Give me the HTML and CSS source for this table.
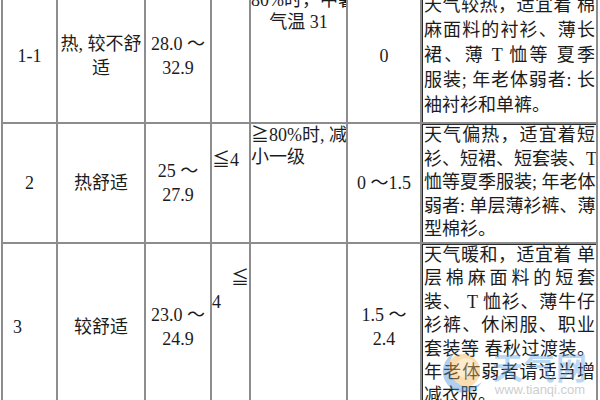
FILE: index.html
```html
<!DOCTYPE html>
<html lang="zh-CN">
<head>
<meta charset="utf-8">
<title>穿衣指数</title>
<link rel="stylesheet" href="styles.css">
</head>
<body>
<div class="grid">
  <!-- row 1 -->
  <div class="cell mid">1-1</div>
  <div class="cell mid">热, 较不舒<br>适</div>
  <div class="cell mid">28.0 ～<br>32.9</div>
  <div class="cell"></div>
  <div class="cell cond cond-center">80%时，中暑<br>气温 31</div>
  <div class="cell mid">0</div>
  <div class="cell desc desc-mid lh25">
    <span class="ln">天气较热，适宜着 棉</span>
    <span class="ln">麻面料的衬衫、薄长</span>
    <span class="ln">裙、薄 T 恤等 夏季</span>
    <span class="ln">服装; 年老体弱者: 长</span>
    <span class="ln last">袖衬衫和单裤。</span>
  </div>

  <!-- row 2 -->
  <div class="cell mid">2</div>
  <div class="cell mid">热舒适</div>
  <div class="cell mid">25 ～<br>27.9</div>
  <div class="cell lim"><div class="blank"></div><div>≦4</div></div>
  <div class="cell cond">≧80%时, 减<br>小一级</div>
  <div class="cell mid">0 ～1.5</div>
  <div class="cell desc lh236">
    <span class="ln">天气偏热，适宜着短</span>
    <span class="ln">衫、短裙、短套装、T</span>
    <span class="ln">恤等夏季服装; 年老体</span>
    <span class="ln">弱者: 单层薄衫裤、薄</span>
    <span class="ln last">型棉衫。</span>
  </div>

  <!-- row 3 -->
  <div class="cell mid num-left">3</div>
  <div class="cell mid">较舒适</div>
  <div class="cell mid">23.0 ～<br>24.9</div>
  <div class="cell lim"><div class="blank"></div><div class="lim-sign">≦</div><div>4</div></div>
  <div class="cell cond"></div>
  <div class="cell mid">1.5 ～<br>2.4</div>
  <div class="cell desc lh234">
    <span class="ln">天气暖和，适宜着 单</span>
    <span class="ln">层棉麻面料的短套</span>
    <span class="ln">装、 T 恤衫、薄牛仔</span>
    <span class="ln">衫裤、休闲服、职业</span>
    <span class="ln">套装等 春秋过渡装。</span>
    <span class="ln">年老体弱者请适当增</span>
    <span class="ln last">减衣服。</span>
  </div>
</div>

<div class="watermark">
  <svg class="wm-logo" width="50" height="50" viewBox="0 0 50 50" aria-hidden="true">
    <circle cx="27" cy="23" r="17" fill="#f6b04a"/>
    <circle cx="30" cy="20" r="10" fill="#fbd38a"/>
    <path d="M20 4 A21 21 0 1 0 46 34 A17 17 0 1 1 20 4 Z" fill="#4a90d9"/>
  </svg>
  <div class="wm-text">
    <div class="wm-name">天气网</div>
    <div class="wm-url">www.tianqi.com</div>
  </div>
</div>
</body>
</html>
```

FILE: styles.css
```css
html, body {
  margin: 0;
  padding: 0;
}

body {
  position: relative;
  width: 600px;
  height: 400px;
  overflow: hidden;
  background: #ffffff;
  color: #1c1c1c;
  font-family: "Liberation Serif", "Noto Sans CJK SC", serif;
  font-size: 18px;
}

.grid {
  display: grid;
  grid-template-columns: 53px 86px 64px 37px 95px 72px 174px;
  grid-template-rows: 133px 118px 166px;
  gap: 2px;
  padding: 2px;
  width: 597px;
  box-sizing: border-box;
  margin: -13px 0 0 1px;
  background: #8d8d8d;
}

.cell {
  background: #ffffff;
  white-space: nowrap;
  line-height: 24px;
  overflow: hidden;
  text-align: center;
}

.mid {
  display: flex;
  flex-direction: column;
  justify-content: center;
  align-items: center;
}

.num-left {
  align-items: flex-start;
  padding-left: 10px;
}

.cond {
  text-align: left;
  line-height: 22px;
}

.cond-center {
  text-align: center;
}

.lim {
  text-align: left;
}

.blank {
  height: 24px;
}

.lim-sign {
  text-align: right;
  margin-top: -2px;
}

.desc {
  padding: 0 1px 0 2px;
  box-shadow: inset 1px 1px 0 #2a2a2a;
}

.desc-mid {
  display: flex;
  flex-direction: column;
  justify-content: center;
}

.ln {
  display: block;
  text-align: justify;
  text-align-last: justify;
  text-justify: inter-character;
}

.ln.last {
  text-align: left;
  text-align-last: left;
}

.lh25 { line-height: 25px; }
.lh236 { line-height: 23.6px; }
.lh234 { line-height: 23.4px; }

.watermark {
  position: absolute;
  left: 436px;
  top: 348px;
  display: flex;
  align-items: center;
  gap: 6px;
  opacity: 0.42;
  pointer-events: none;
}

.wm-logo {
  display: block;
}

.wm-text {
  display: flex;
  flex-direction: column;
  align-items: center;
}

.wm-name {
  font-family: "Noto Sans CJK SC", sans-serif;
  font-weight: 700;
  font-size: 31px;
  line-height: 34px;
  letter-spacing: 1px;
  color: #5ea6e6;
}

.wm-url {
  font-family: "Liberation Sans", sans-serif;
  font-size: 13px;
  line-height: 14px;
  color: #8a8a8a;
}
```
